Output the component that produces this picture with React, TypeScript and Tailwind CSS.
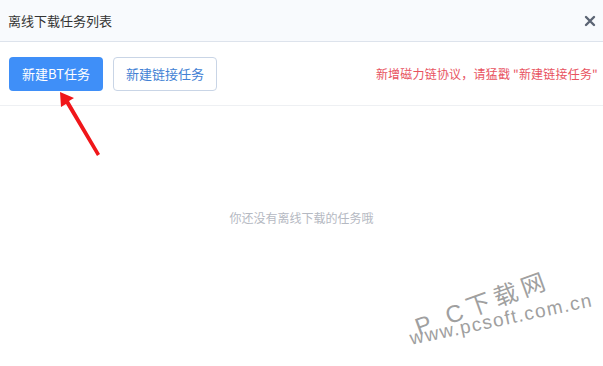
import React from 'react'

const font = { fontFamily: '"Noto Sans CJK SC", "Liberation Sans", sans-serif' }

export default function App() {
  return (
    <div className="relative w-[603px] h-[366px] bg-white overflow-hidden" style={font}>
      {/* Header */}
      <div className="h-[42px] flex items-center justify-between pl-2 pr-[6px] bg-[#f8fafd] border-b border-[#dde3ec]">
        <span className="text-[13px] text-[#333]">离线下载任务列表</span>
        <svg width="12" height="12" viewBox="0 0 12 12" className="mr-[1px]">
          <path d="M2 2L10 10M10 2L2 10" stroke="#5b6474" strokeWidth="2.4" strokeLinecap="round" />
        </svg>
      </div>

      {/* Toolbar */}
      <div className="h-[64px] flex items-center pl-[9px] pr-[5px] border-b border-[#eef0f3]">
        <button className="h-[34px] w-[94px] rounded-[4px] bg-[#3f8ff8] text-white text-[13px]">新建BT任务</button>
        <button className="ml-[10px] h-[34px] w-[104px] rounded-[4px] border border-[#c9d5e6] bg-white text-[#4281d4] text-[13px]">新建链接任务</button>
        <span className="ml-auto text-[12px] text-[#e8535f] tracking-[0.2px]">新增磁力链协议，请猛戳 "新建链接任务"</span>
      </div>

      {/* Empty */}
      <div className="flex justify-center pt-[103px]">
        <span className="text-[12px] text-[#b5b9c2]">你还没有离线下载的任务哦</span>
      </div>

      {/* Red arrow annotation */}
      <svg className="absolute left-0 top-0" width="603" height="366" viewBox="0 0 603 366">
        <path d="M100 154 L69 101 L74 98 L60 92 L61 107 L66 104 L97 156 Z" fill="#f0161a" />
      </svg>

      {/* Watermark */}
      <div
        className="absolute left-[416px] top-[316px] -rotate-[20deg] origin-left text-[#a0a0a0] text-[24px] leading-none tracking-[5px] select-none"
        style={{ fontFamily: '"Liberation Sans", "Noto Sans CJK SC", sans-serif' }}
      >
        P C下载网
      </div>
      <div
        className="absolute left-[410px] top-[329px] -rotate-[12deg] origin-left text-[#a0a0a0] text-[19px] leading-none tracking-[1.4px] select-none"
        style={{ fontFamily: '"Liberation Sans", sans-serif' }}
      >
        www.pcsoft.com.cn
      </div>
    </div>
  )
}
